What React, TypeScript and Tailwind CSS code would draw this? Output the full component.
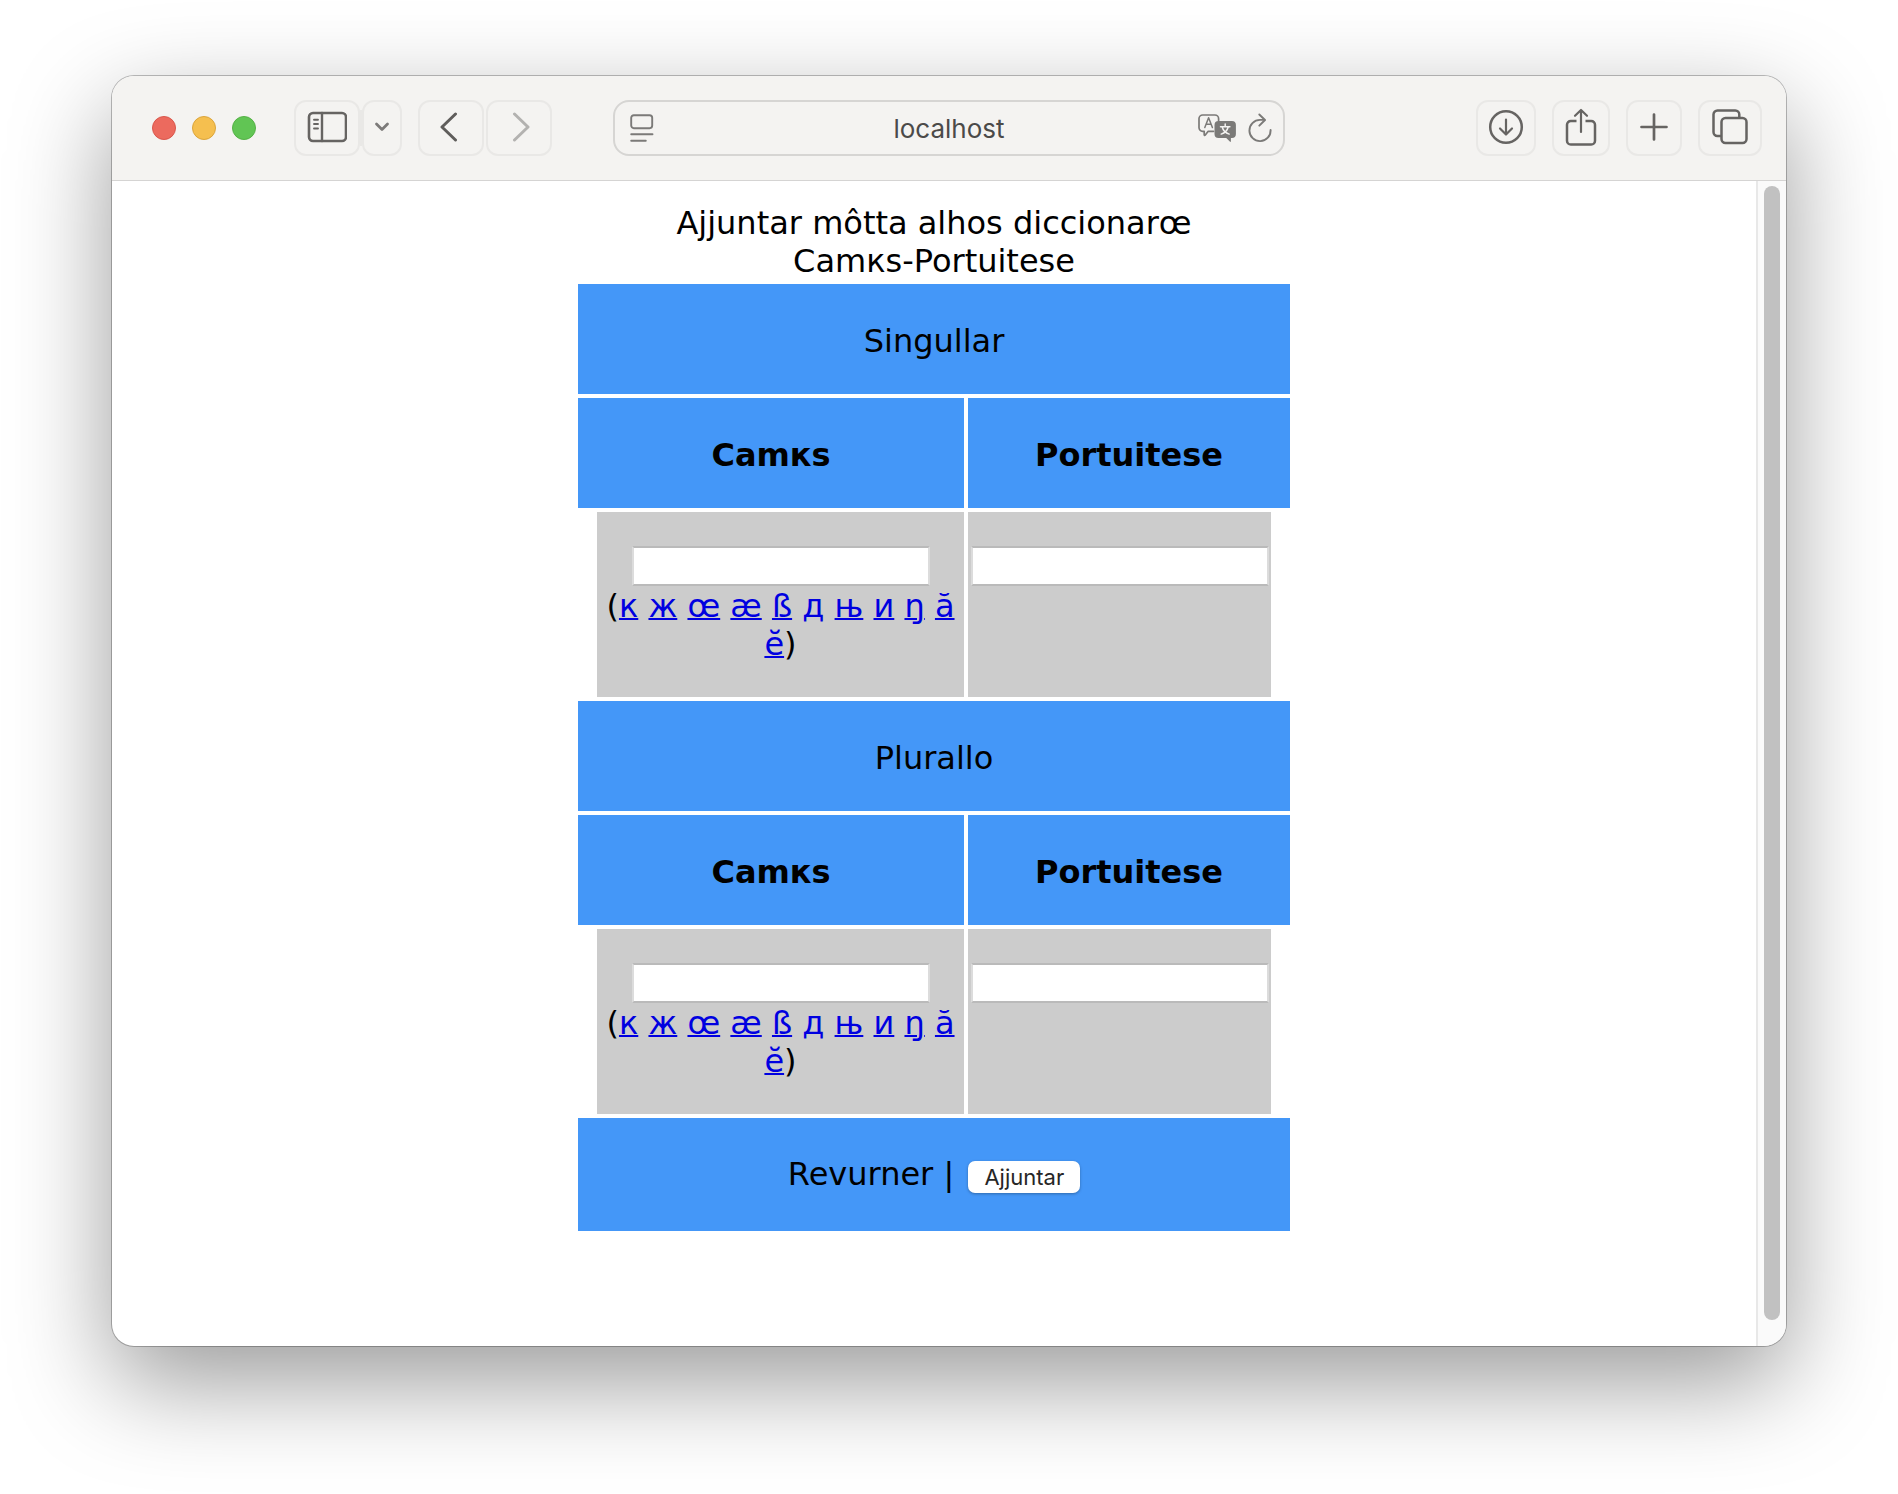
import React from "react";

type IconProps = { className?: string };

const SidebarIcon = ({ className }: IconProps) => (
  <svg className={className} width="40" height="32" viewBox="0 0 40 32" fill="none" stroke="#666462" strokeLinecap="round">
    <rect x="2" y="2" width="37" height="28" rx="4" strokeWidth="2.6" />
    <path d="M15 2v28" strokeWidth="2.4" />
    <path d="M7 8.700h4M7 13h4M7 17.500h4" strokeWidth="1.900" />
  </svg>
);

const ChevronDownIcon = () => (
  <svg width="16" height="12" viewBox="0 0 16 12" fill="none" stroke="#7c7a79" strokeWidth="2.8" strokeLinecap="round" strokeLinejoin="round">
    <path d="M2.500 3l5.500 5.500L13.500 3" />
  </svg>
);

const BackIcon = () => (
  <svg width="22" height="30" viewBox="0 0 22 30" fill="none" stroke="#5f5d5b" strokeWidth="3" strokeLinecap="round" strokeLinejoin="round">
    <path d="M15.500 2L2 15l13.500 13" />
  </svg>
);

const ForwardIcon = () => (
  <svg width="22" height="30" viewBox="0 0 22 30" fill="none" stroke="#b3b2b0" strokeWidth="3" strokeLinecap="round" strokeLinejoin="round">
    <path d="M6.500 2L20 15 6.500 28" />
  </svg>
);

const ReaderIcon = () => (
  <svg width="24" height="28" viewBox="0 0 24 28" fill="none" stroke="#7b7a78" strokeWidth="1.900" strokeLinecap="round">
    <rect x="1.200" y="1.200" width="21" height="13" rx="2.600" />
    <path d="M1.200 20.300h21.300M1.200 26.800h14.600" />
  </svg>
);

const TranslateIcon = () => (
  <svg width="38" height="28" viewBox="0 0 38 28" fill="none">
    <path
      d="M15.500 17.300l-5.300 0-3.100 3.900c-.4.400-.9.200-.9-.4v-3.500H4.600A3.700 3.700 0 0 1 1 13.600V4.600A3.700 3.700 0 0 1 4.700 1h12.200a3.700 3.700 0 0 1 3.700 3.700v2"
      stroke="#7b7a78"
      strokeWidth="1.700"
      strokeLinecap="round"
      strokeLinejoin="round"
    />
    <path d="M6.800 13.500L10.600 3.800 14.400 13.500M8.200 10.300h4.800" stroke="#7b7a78" strokeWidth="1.500" strokeLinecap="round" strokeLinejoin="round" />
    <path
      d="M20.500 7h13.400a4 4 0 0 1 4 4v9a4 4 0 0 1-4 4h-1v3.200c0 .7-.7.900-1.100.4L28.200 24h-7.700a4 4 0 0 1-4-4v-9a4 4 0 0 1 4-4z"
      fill="#7b7a78"
    />
    <path d="M27.200 10v2.400M22.500 12.700h9.400M24.300 13.200c.7 2.700 3.400 5.800 6.900 6.900M30.100 13.200c-.7 2.700-3.400 5.800-6.900 6.900" stroke="#f4f3f1" strokeWidth="1.500" strokeLinecap="round" />
  </svg>
);

const ReloadIcon = () => (
  <svg width="24" height="30" viewBox="0 0 24 30" fill="none" stroke="#7b7a78" strokeWidth="1.900" strokeLinecap="round" strokeLinejoin="round">
    <path d="M22.600 17A10.600 10.600 0 1 1 12 6.900h4.500" />
    <path d="M11.300 1.500L17 7l-5.700 5.700" />
  </svg>
);

const DownloadIcon = () => (
  <svg width="36" height="36" viewBox="0 0 36 36" fill="none" stroke="#666462" strokeLinecap="round" strokeLinejoin="round">
    <circle cx="18" cy="18" r="15.800" strokeWidth="2.500" />
    <path d="M18 10.500v14.500M12 19.500l6 6 6-6" strokeWidth="2.200" />
  </svg>
);

const ShareIcon = () => (
  <svg width="32" height="38" viewBox="0 0 32 38" fill="none" stroke="#666462" strokeLinecap="round" strokeLinejoin="round">
    <path d="M11.500 13H5.800A3.800 3.800 0 0 0 2 16.800v15.900A3.800 3.800 0 0 0 5.800 36.500h20.400a3.800 3.800 0 0 0 3.800-3.800V16.800a3.800 3.800 0 0 0-3.800-3.800h-5.700" strokeWidth="2.500" strokeLinecap="butt" />
    <path d="M16 2v22M10 7.800L16 2l6 5.800" strokeWidth="2.200" />
  </svg>
);

const PlusIcon = () => (
  <svg width="28" height="28" viewBox="0 0 28 28" fill="none" stroke="#666462" strokeWidth="2.700" strokeLinecap="round">
    <path d="M14 1.500v25M1.500 14h25" />
  </svg>
);

const TabsIcon = () => (
  <svg width="36" height="36" viewBox="0 0 36 36" fill="none" stroke="#666462" strokeWidth="2.500">
    <path d="M9.500 27H5.400A4 4 0 0 1 1.500 23V5.500a4 4 0 0 1 4-4h17.800a4 4 0 0 1 4 4V9" />
    <rect x="9.500" y="9" width="25" height="25" rx="4" />
  </svg>
);

type ToolButtonProps = { label: string; width: string; disabled?: boolean; children: React.ReactNode };

const ToolButton = ({ label, width, disabled, children }: ToolButtonProps) => (
  <button
    type="button"
    aria-label={label}
    disabled={disabled}
    className={`flex h-14 shrink-0 items-center justify-center rounded-xl border-2 border-[#e9e8e6] pb-[2px] ${width}`}
  >
    {children}
  </button>
);

const Toolbar = () => (
  <header className="grid h-[105px] grid-cols-[1fr_minmax(0,672px)_1fr] items-center rounded-t-[22px] border-b border-[#d5d4d3] bg-[#f4f3f1]">
    <div className="flex items-center pl-10">
      <div className="flex gap-4">
        <button type="button" aria-label="Close" className="size-6 rounded-full border border-[#d9574c] bg-[#ec6a5e]" />
        <button type="button" aria-label="Minimize" className="size-6 rounded-full border border-[#dba53c] bg-[#f5bf4f]" />
        <button type="button" aria-label="Zoom" className="size-6 rounded-full border border-[#55b146] bg-[#61c554]" />
      </div>
      <div className="ml-[38px] flex">
        <ToolButton label="Sidebar" width="w-[66px]">
          <SidebarIcon />
        </ToolButton>
        <span className="h-9 w-[2px] self-center bg-[#e9e8e6]" />
        <ToolButton label="Tab groups" width="w-10">
          <ChevronDownIcon />
        </ToolButton>
      </div>
      <div className="ml-4 flex gap-[2px]">
        <ToolButton label="Back" width="w-[66px]">
          <BackIcon />
        </ToolButton>
        <ToolButton label="Forward" width="w-[66px]" disabled>
          <ForwardIcon />
        </ToolButton>
      </div>
    </div>

    <div className="flex h-14 items-center rounded-2xl border-2 border-[#d6d5d3] px-[11px]">
      <button type="button" aria-label="Page menu" className="flex w-[74px] pl-1">
        <ReaderIcon />
      </button>
      <input
        aria-label="Address"
        defaultValue="localhost"
        className="min-w-0 flex-1 bg-transparent pt-[2px] text-center font-['Inter',sans-serif] text-[26px] leading-8 text-[#4b4a49] outline-none"
      />
      <div className="flex items-center gap-3">
        <button type="button" aria-label="Translate">
          <TranslateIcon />
        </button>
        <button type="button" aria-label="Reload">
          <ReloadIcon />
        </button>
      </div>
    </div>

    <div className="flex items-center justify-end gap-4 pr-6">
      <ToolButton label="Downloads" width="w-[60px]">
        <DownloadIcon />
      </ToolButton>
      <ToolButton label="Share" width="w-[58px]">
        <ShareIcon />
      </ToolButton>
      <ToolButton label="New tab" width="w-14">
        <PlusIcon />
      </ToolButton>
      <ToolButton label="Tab overview" width="w-16">
        <TabsIcon />
      </ToolButton>
    </div>
  </header>
);

const letters = ["к", "ж", "œ", "æ", "ß", "д", "њ", "и", "ŋ", "ă", "ĕ"];

const fieldClass =
  "mx-auto block h-10 w-[298px] border-2 border-x-[#dcdcdc] border-y-[#bababa] bg-white px-1 text-[22px] outline-none";

const Section = ({ title, id }: { title: string; id: string }) => (
  <tbody>
    <tr>
      <td colSpan={2} className="bg-[#4497f8] pt-[38px] pb-[34px]">
        {title}
      </td>
    </tr>
    <tr>
      <th scope="col" id={`${id}-camks`} className="w-[386px] bg-[#4497f8] pt-[38px] pb-[34px] font-bold">
        Camкs
      </th>
      <th scope="col" id={`${id}-portuitese`} className="bg-[#4497f8] pt-[38px] pb-[34px] font-bold">
        Portuitese
      </th>
    </tr>
    <tr>
      <td className="border-l-[19px] border-white bg-[#cccccc] pt-[34px] pb-[34px] align-top">
        <input type="text" aria-labelledby={`${id}-camks`} className={fieldClass} />
        <p className="pt-px">
          (
          {letters.map((letter, i) => (
            <React.Fragment key={letter}>
              {i > 0 && " "}
              <a
                href={`#${id}-${letter}`}
                className={letter === "д" ? "text-[#0000e0]" : "text-[#0000e0] underline decoration-2"}
              >
                {letter}
              </a>
            </React.Fragment>
          ))}
          )
        </p>
      </td>
      <td className="border-r-[19px] border-white bg-[#cccccc] pt-[34px] align-top">
        <input type="text" aria-labelledby={`${id}-portuitese`} className={fieldClass} />
      </td>
    </tr>
  </tbody>
);

export default function App() {
  return (
    <div className="flex min-h-screen bg-white px-28 pt-[76px] pb-[148px]">
      <div className="flex min-w-0 flex-1 flex-col rounded-[22px] bg-white shadow-[0_0_0_1px_rgba(0,0,0,0.25),0_36px_100px_rgba(0,0,0,0.4)]">
        <Toolbar />
        <div className="flex flex-1">
          <main className="min-w-0 flex-1 pt-[23px]">
            <form onSubmit={(e) => e.preventDefault()}>
              <table className="mx-auto w-[720px] border-separate border-spacing-1 text-center font-['DejaVu_Sans',sans-serif] text-[32px] leading-[38px] text-black">
                <caption>
                  Ajjuntar môtta alhos diccionarœ
                  <br />
                  Camкs-Portuitese
                </caption>
                <Section title="Singullar" id="singullar" />
                <Section title="Plurallo" id="plurallo" />
                <tfoot>
                  <tr>
                    <td colSpan={2} className="bg-[#4497f8] pt-[37px] pb-[38px]">
                      <a href="#revurner">Revurner</a> |{" "}
                      <button
                        type="submit"
                        className="ml-1 h-8 rounded-[7px] bg-white px-4 font-['Inter',sans-serif] text-[22px] leading-8 text-[#262626] shadow-[0_1px_3px_rgba(0,0,0,0.3)]"
                      >
                        Ajjuntar
                      </button>
                    </td>
                  </tr>
                </tfoot>
              </table>
            </form>
          </main>
          <div className="flex w-[30px] justify-center rounded-br-[22px] border-l-2 border-[#e8e8e8] bg-[#fafafa] pt-[5px] pb-[26px]">
            <div className="w-4 rounded-full bg-[#c1c1c1]" />
          </div>
        </div>
      </div>
    </div>
  );
}
